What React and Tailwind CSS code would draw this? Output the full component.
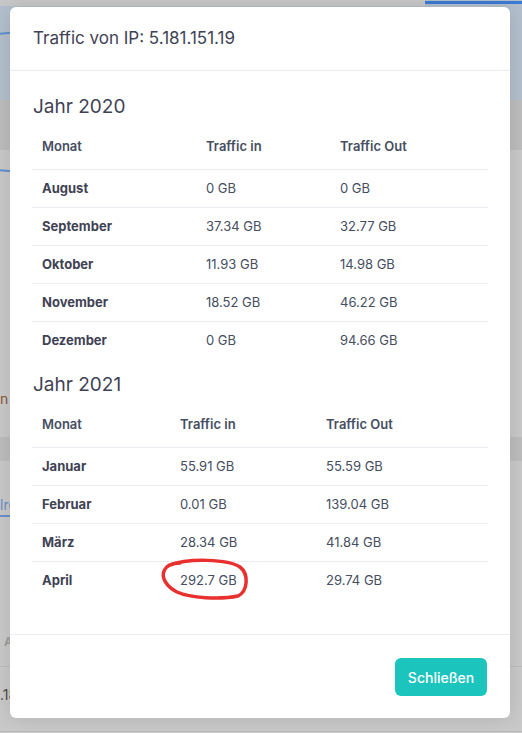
import React from "react";

const t2020 = [
  ["August", "0 GB", "0 GB"],
  ["September", "37.34 GB", "32.77 GB"],
  ["Oktober", "11.93 GB", "14.98 GB"],
  ["November", "18.52 GB", "46.22 GB"],
  ["Dezember", "0 GB", "94.66 GB"],
];
const t2021 = [
  ["Januar", "55.91 GB", "55.59 GB"],
  ["Februar", "0.01 GB", "139.04 GB"],
  ["März", "28.34 GB", "41.84 GB"],
  ["April", "292.7 GB", "29.74 GB"],
];

function YearTable({ year, rows, cols }) {
  return (
    <div>
      <div className="h-[24px] pt-[4px] text-[19px] leading-[20px] text-[#3f4254] mb-[6px] pl-px">Jahr {year}</div>
      <div>
        <div className={`grid ${cols} h-[46px] pt-[2px] items-center text-[13px] font-semibold text-[#464e5f]`}>
          <div className="pl-[10px]">Monat</div>
          <div className="pl-[10px]">Traffic in</div>
          <div className="pl-[10px]">Traffic Out</div>
        </div>
        {rows.map((r) => (
          <div
            key={r[0]}
            className={`grid ${cols} h-[38px] items-center border-t border-[#ebedf3] text-[13px] text-[#464e5f]`}
          >
            <div className="pl-[10px] font-bold text-[#3f4254]">{r[0]}</div>
            <div className="pl-[10px]">{r[1]}</div>
            <div className="pl-[10px]">{r[2]}</div>
          </div>
        ))}
      </div>
    </div>
  );
}

export default function App() {
  return (
    <div
      className="relative w-[522px] h-[733px] overflow-hidden bg-[#c9c9c9]"
      style={{ fontFamily: "Inter, 'Noto Sans', sans-serif" }}
    >
      {/* dimmed page behind */}
      <div className="flex flex-col">
        <div className="h-[100px] bg-[#b3bfcc] relative">
          <div className="absolute left-[425px] top-[1px] right-0 h-[3px] bg-[#3a7bd5]" />
          <div className="absolute left-0 top-0 w-[425px] h-[6px] bg-[#c8c8c8]" />
          <div className="absolute -left-[60px] top-[32px] w-[140px] h-[140px] rounded-full border-2 border-[#5d8fd0]" />
        </div>
        <div className="h-[50px] bg-[#bdbdbd]" />
        <div className="h-[225px]" />
        <div className="h-[62px] pt-[14px] leading-[20px] text-[14px] text-[#8a5a3a]">n !</div>
        <div className="h-[24px] bg-[#bdbdbd]" />
        <div className="h-[54px] pt-[34px] leading-[20px] text-[14px] text-[#6a8fc8]">lre</div>
        <div className="h-[2px] w-[30px] bg-[#6a8fc8]" />
        <div className="h-[150px] border-b border-[#bcbcbc] flex items-end pb-[14px] leading-[20px] text-[12px] font-semibold text-[#9a9a9a] pl-[4px]">A</div>
        <div className="h-[65px] border-b border-[#bcbcbc] pt-[18px] leading-[20px] text-[14px] text-[#4a4a4a]">.18</div>
      </div>

      {/* modal */}
      <div className="absolute left-[10px] top-[7px] w-[500px] h-[711px] bg-white rounded-[6px] shadow-[0_0_20px_rgba(0,0,0,0.12)] flex flex-col">
        <div className="h-[64px] flex items-center px-[23px] border-b border-[#ebedf3] text-[17px] text-[#3f4254]">
          Traffic von IP: 5.181.151.19
        </div>
        <div className="px-[22px] pt-[22px] pb-[35px] flex flex-col gap-[12px]">
          <YearTable year="2020" rows={t2020} cols="grid-cols-[164px_134px_1fr]" />
          <YearTable year="2021" rows={t2021} cols="grid-cols-[138px_146px_1fr]" />
        </div>
        <div className="border-t border-[#ebedf3] flex justify-end px-[23px] pt-[23px]">
          <button className="h-[38px] w-[92px] rounded-[6px] bg-[#1bc5bd] text-white text-[14px] font-medium">
            Schließen
          </button>
        </div>
      </div>

      {/* red annotation */}
      <svg className="absolute left-0 top-0 pointer-events-none" width="522" height="733">
        <path
          d="M 170 565 C 188 558, 228 559, 240 567 C 249 574, 248 591, 238 596 C 220 600, 190 598, 177 592 C 167 587, 161 578, 164 571 C 166 566, 172 563, 180 563"
          fill="none"
          stroke="#e8302f"
          strokeWidth="3.5"
          strokeLinecap="round"
        />
      </svg>
    </div>
  );
}
